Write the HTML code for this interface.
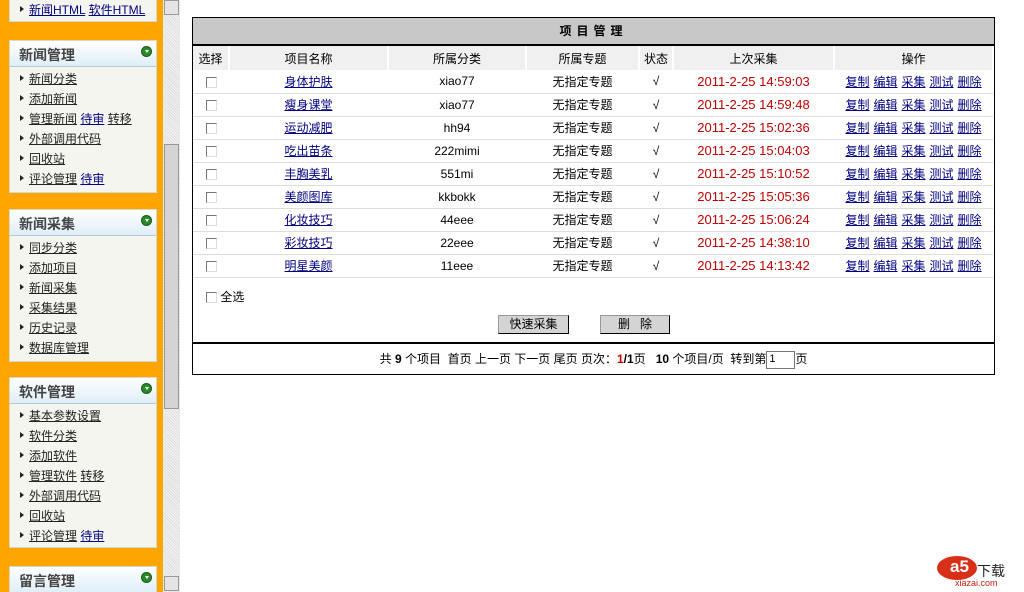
<!DOCTYPE html>
<html><head><meta charset="utf-8"><style>
*{margin:0;padding:0;box-sizing:border-box}
html,body{width:1024px;height:592px;overflow:hidden}
body{background:#fff;position:relative;font:12px "Liberation Sans","Noto Sans CJK SC",sans-serif;color:#000}
a{color:#000080;text-decoration:underline}
.side{position:absolute;left:0;top:0;width:163px;height:592px;background:#ffa500;overflow:hidden}
.panel{position:absolute;left:9px;width:148px;background:#f5f5f0;border:1px solid #d8d8c8}
.ph{height:26px;background:linear-gradient(#fff,#dfeef8);border-bottom:1px solid #b8c8d0;font-size:14px;font-weight:bold;color:#444;padding:4px 0 0 9px;position:relative}
.ph i{position:absolute;right:4px;top:5px;width:11px;height:11px;border-radius:50%;background:#2a8a2a;border:1px solid #1a5a1a}
.ph i:after{content:"";position:absolute;left:3px;top:3px;border:2px solid transparent;border-top:3px solid #fff}
.panel ul{list-style:none;padding:3px 0 0 9px}
.panel li{height:20px;line-height:18px;padding-left:10px;position:relative}
.panel li:before{content:"";position:absolute;left:1px;top:5px;border:3px solid transparent;border-left:4px solid #222;border-right:0}
.panel li a{color:#222}.panel li a.b{color:#000080}
.sb{position:absolute;left:163px;top:0;width:17px;height:592px;background:repeating-linear-gradient(45deg,#ddd 0 1px,#f4f4f4 1px 2px)}
.sb .bt{position:absolute;left:1px;width:15px;height:15px;background:#e4e4e4;border:1px solid #999}
.sb .th{position:absolute;left:1px;top:144px;width:15px;height:265px;background:#d4d4d4;border:1px solid #999}
.main{position:absolute;left:192px;top:17px;width:803px;height:358px;border:1px solid #000}
.title{height:28px;background:#c8c8c8;border-bottom:2px solid #000;text-align:center;font-weight:bold;line-height:27px;letter-spacing:5px}
table{border-collapse:collapse;table-layout:fixed;width:801px}
td{text-align:center;height:23px;border-bottom:1px solid #ddd;white-space:nowrap;font-size:12px}
tr.h td{background:#f0f0f0;border-right:2px solid #fff;height:24px;border-bottom:0}
.cb{display:inline-block;width:11px;height:11px;border:1px solid #777;border-right-color:#ddd;border-bottom-color:#ddd;background:#fff;vertical-align:middle}
.red{color:#c00000;font-size:13px}
.ops a{margin:0 2px}
.btn{position:absolute;top:297px;height:19px;background:#d4d4d4;border:1px solid #000;border-top-color:#999;border-left-color:#999;text-align:center;line-height:17px}
.pg{position:absolute;left:0;top:324px;width:801px;border-top:2px solid #000;height:32px;line-height:30px;text-align:center}
</style></head><body>
<div class="side">
<div class="panel" style="top:-4px;height:26px"><ul style="padding-top:4px"><li><a class="b" href="#">新闻HTML</a> <a class="b" href="#">软件HTML</a></li></ul></div>
<div class="panel" style="top:40px;height:153px"><div class="ph">新闻管理<i></i></div><ul>
<li><a href="#">新闻分类</a></li><li><a href="#">添加新闻</a></li><li><a href="#">管理新闻</a> <a class="b" href="#">待审</a> <a href="#">转移</a></li><li><a href="#">外部调用代码</a></li><li><a href="#">回收站</a></li><li><a href="#">评论管理</a> <a class="b" href="#">待审</a></li></ul></div>
<div class="panel" style="top:209px;height:153px"><div class="ph">新闻采集<i></i></div><ul>
<li><a href="#">同步分类</a></li><li><a href="#">添加项目</a></li><li><a href="#">新闻采集</a></li><li><a href="#">采集结果</a></li><li><a href="#">历史记录</a></li><li><a href="#">数据库管理</a></li></ul></div>
<div class="panel" style="top:377px;height:171px"><div class="ph">软件管理<i></i></div><ul>
<li><a href="#">基本参数设置</a></li><li><a href="#">软件分类</a></li><li><a href="#">添加软件</a></li><li><a href="#">管理软件</a> <a href="#">转移</a></li><li><a href="#">外部调用代码</a></li><li><a href="#">回收站</a></li><li><a href="#">评论管理</a> <a class="b" href="#">待审</a></li></ul></div>
<div class="panel" style="top:566px;height:40px"><div class="ph">留言管理<i></i></div></div>
</div>
<div class="sb"><div class="bt" style="top:0"></div><div class="th"></div><div class="bt" style="top:576px"></div></div>
<div class="main">
<div class="title">项目管理</div>
<table>
<colgroup><col style="width:36px"><col style="width:159px"><col style="width:138px"><col style="width:113px"><col style="width:34px"><col style="width:161px"><col></colgroup>
<tr class="h"><td>选择</td><td>项目名称</td><td>所属分类</td><td>所属专题</td><td>状态</td><td>上次采集</td><td>操作</td></tr>
<tr><td><span class="cb"></span></td><td><a href="#">身体护肤</a></td><td>xiao77</td><td>无指定专题</td><td>√</td><td class="red">2011-2-25 14:59:03</td><td class="ops"><a>复制</a><a>编辑</a><a>采集</a><a>测试</a><a>删除</a></td></tr>
<tr><td><span class="cb"></span></td><td><a href="#">瘦身课堂</a></td><td>xiao77</td><td>无指定专题</td><td>√</td><td class="red">2011-2-25 14:59:48</td><td class="ops"><a>复制</a><a>编辑</a><a>采集</a><a>测试</a><a>删除</a></td></tr>
<tr><td><span class="cb"></span></td><td><a href="#">运动减肥</a></td><td>hh94</td><td>无指定专题</td><td>√</td><td class="red">2011-2-25 15:02:36</td><td class="ops"><a>复制</a><a>编辑</a><a>采集</a><a>测试</a><a>删除</a></td></tr>
<tr><td><span class="cb"></span></td><td><a href="#">吃出苗条</a></td><td>222mimi</td><td>无指定专题</td><td>√</td><td class="red">2011-2-25 15:04:03</td><td class="ops"><a>复制</a><a>编辑</a><a>采集</a><a>测试</a><a>删除</a></td></tr>
<tr><td><span class="cb"></span></td><td><a href="#">丰胸美乳</a></td><td>551mi</td><td>无指定专题</td><td>√</td><td class="red">2011-2-25 15:10:52</td><td class="ops"><a>复制</a><a>编辑</a><a>采集</a><a>测试</a><a>删除</a></td></tr>
<tr><td><span class="cb"></span></td><td><a href="#">美颜图库</a></td><td>kkbokk</td><td>无指定专题</td><td>√</td><td class="red">2011-2-25 15:05:36</td><td class="ops"><a>复制</a><a>编辑</a><a>采集</a><a>测试</a><a>删除</a></td></tr>
<tr><td><span class="cb"></span></td><td><a href="#">化妆技巧</a></td><td>44eee</td><td>无指定专题</td><td>√</td><td class="red">2011-2-25 15:06:24</td><td class="ops"><a>复制</a><a>编辑</a><a>采集</a><a>测试</a><a>删除</a></td></tr>
<tr><td><span class="cb"></span></td><td><a href="#">彩妆技巧</a></td><td>22eee</td><td>无指定专题</td><td>√</td><td class="red">2011-2-25 14:38:10</td><td class="ops"><a>复制</a><a>编辑</a><a>采集</a><a>测试</a><a>删除</a></td></tr>
<tr><td><span class="cb"></span></td><td><a href="#">明星美颜</a></td><td>11eee</td><td>无指定专题</td><td>√</td><td class="red">2011-2-25 14:13:42</td><td class="ops"><a>复制</a><a>编辑</a><a>采集</a><a>测试</a><a>删除</a></td></tr>
</table>
<div style="position:absolute;left:13px;top:270px"><span class="cb"></span> 全选</div>
<div class="btn" style="left:305px;width:71px">快速采集</div>
<div class="btn" style="left:407px;width:70px">删 &nbsp; 除</div>
<div class="pg">共 <b>9</b> 个项目 &nbsp;首页 上一页 下一页 尾页 页次：<b style="color:#c00">1</b><b>/1</b>页 &nbsp; <b>10</b> 个项目/页 &nbsp;转到第<span style="display:inline-block;width:29px;height:18px;border:1px solid #777;vertical-align:middle;line-height:14px;text-align:left;padding-left:2px;font-size:11px">1</span>页</div>
</div>
<div style="position:absolute;left:937px;top:556px;width:40px;height:24px;border-radius:50%;background:#d83018"></div>
<div style="position:absolute;left:950px;top:557px;color:#fff;font-weight:bold;font-size:17px">a5</div>
<div style="position:absolute;left:977px;top:561px;font-size:14px;color:#222">下载</div>
<div style="position:absolute;left:955px;top:578px;font-size:9px;color:#c02010">xiazai.com</div>
</body></html>
